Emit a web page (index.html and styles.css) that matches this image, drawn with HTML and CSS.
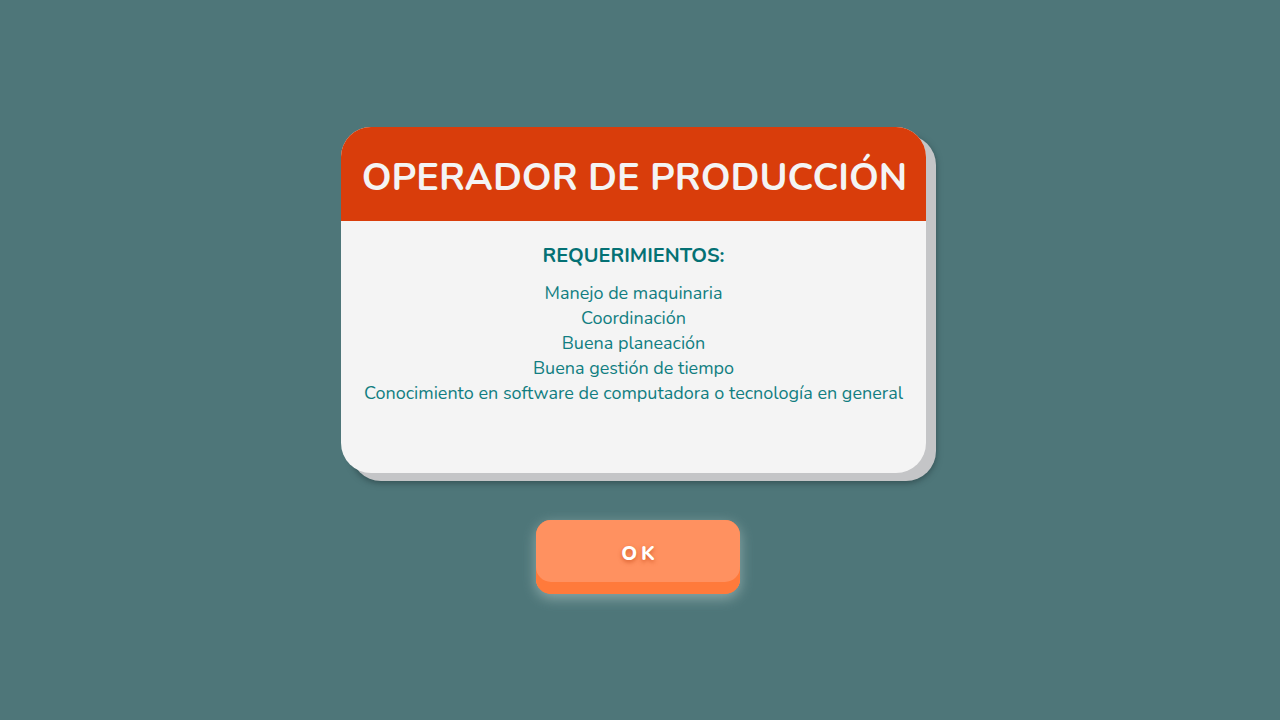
FILE: index.html
```html
<!DOCTYPE html>
<html lang="es">
<head>
<meta charset="utf-8">
<link rel="stylesheet" href="styles.css">
</head>
<body>
<main class="stage">
  <section class="card">
    <header class="card-head">
      <h1 class="title">OPERADOR DE PRODUCCIÓN</h1>
    </header>
    <div class="card-body">
      <h2 class="subtitle">REQUERIMIENTOS:</h2>
      <ul class="reqs">
        <li>Manejo de maquinaria</li>
        <li>Coordinación</li>
        <li>Buena planeación</li>
        <li>Buena gestión de tiempo</li>
        <li>Conocimiento en software de computadora o tecnología en general</li>
      </ul>
    </div>
  </section>
  <button class="ok-btn"><span>OK</span></button>
</main>
</body>
</html>
```
FILE: styles.css
```css
html, body {
  margin: 0;
  padding: 0;
  height: 100%;
}
body {
  background: #4e7679;
  font-family: "Nunito", "Open Sans", "Noto Sans", sans-serif;
}
.stage {
  display: flex;
  flex-direction: column;
  align-items: center;
  padding-top: 127px;
}
.card {
  width: 585px;
  height: 346px;
  margin-right: 13px;
  background: #f4f4f4;
  border-radius: 30px;
  overflow: hidden;
  box-shadow: 10px 8px 0 #c4c5c7, 10px 10px 6px rgba(30, 50, 52, 0.55);
  display: flex;
  flex-direction: column;
}
.card-head {
  background: #d93d0b;
  height: 94px;
  box-sizing: border-box;
  padding-top: 6px;
  display: flex;
  align-items: center;
  justify-content: center;
}
.title {
  margin: 0;
  color: #f4f4f4;
  font-size: 38px;
  font-weight: 700;
  padding-left: 2px;
}
.card-body {
  display: flex;
  flex-direction: column;
  align-items: center;
  padding-top: 22px;
}
.subtitle {
  margin: 0 0 12px;
  color: #047174;
  font-size: 20px;
  font-weight: 700;
  line-height: 26px;
}
.reqs {
  list-style: none;
  margin: 0;
  padding: 0;
  text-align: center;
  color: #117e81;
  font-size: 18px;
  line-height: 25px;
}
.ok-btn {
  margin-top: 47px;
  margin-right: 4px;
  width: 204px;
  height: 74px;
  border: none;
  padding: 0 0 8px;
  border-radius: 15px;
  background: #ff7a3b;
  box-shadow: inset 0 -12px 0 #ff7a3b, inset 0 62px 0 #ff9160, 0 4px 14px rgba(220, 235, 230, 0.45);
  cursor: pointer;
  display: flex;
  align-items: center;
  justify-content: center;
  font-family: inherit;
}
.ok-btn span {
  color: #ffffff;
  font-size: 20px;
  font-weight: 800;
  letter-spacing: 4px;
  padding-left: 4px;
  text-shadow: 0 2px 4px rgba(205, 80, 30, 0.8);
}
```
